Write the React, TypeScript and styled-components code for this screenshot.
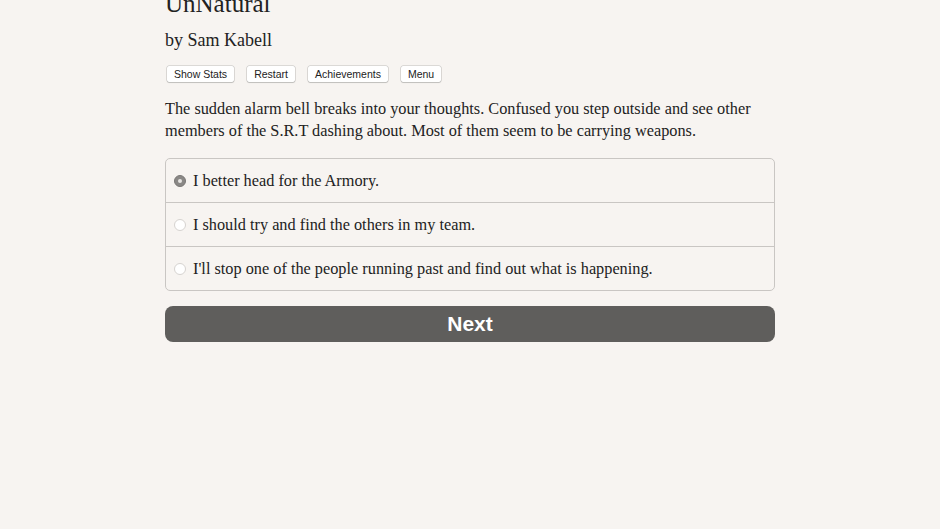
import React, { useState } from 'react';
import styled, { createGlobalStyle } from 'styled-components';

const GlobalStyle = createGlobalStyle`
    html, body {
        margin: 0;
        padding: 0;
        background-color: #f7f4f1;
    }
    body {
        font-family: "Liberation Serif", "Times New Roman", serif;
        color: #222;
    }
`;

const Page = styled.div`
    width: 610px;
    margin: 0 auto;
    padding-bottom: 40px;
`;

const Title = styled.h1`
    font-size: 25px;
    font-weight: normal;
    margin: -10px 0 0 0;
    line-height: 28px;
    color: #222;
`;

const Author = styled.h2`
    font-size: 18px;
    font-weight: normal;
    margin: 11px 0 0 0;
    line-height: 22px;
    color: #222;
`;

const Toolbar = styled.div`
    display: flex;
    gap: 13px;
    margin: 15px 0 0 2px;
`;

const ToolBtn = styled.button`
    font-family: "Liberation Sans", Arial, sans-serif;
    font-size: 10.5px;
    height: 16px;
    padding: 0 7px;
    background-color: #fff;
    border: none;
    border-radius: 2px;
    box-shadow: 0 0 0 0.5px rgba(0, 0, 0, 0.22), 0 1px 1px rgba(0, 0, 0, 0.12);
    color: #222;
    cursor: pointer;
`;

const Passage = styled.p`
    font-size: 16.3px;
    line-height: 22px;
    margin: 16px 0 16px 0;
`;

const Choices = styled.div`
    border: 1px solid #c9c6c3;
    border-radius: 5px;
    overflow: hidden;
`;

const Choice = styled.label`
    display: flex;
    align-items: center;
    height: 43px;
    padding-left: 8px;
    font-size: 16.3px;
    cursor: pointer;
    & + & {
        border-top: 1px solid #c9c6c3;
    }
`;

const Radio = styled.span<{ $checked: boolean }>`
    width: 12px;
    height: 12px;
    border-radius: 50%;
    margin-right: 7px;
    box-sizing: border-box;
    flex-shrink: 0;
    background-color: ${(p) => (p.$checked ? '#8a8886' : '#fff')};
    border: 1px solid ${(p) => (p.$checked ? '#7a7876' : '#d6d3d0')};
    display: flex;
    align-items: center;
    justify-content: center;
    &::after {
        content: '';
        width: 4px;
        height: 4px;
        border-radius: 50%;
        background-color: ${(p) => (p.$checked ? '#e8e6e4' : 'transparent')};
    }
`;

const NextBtn = styled.button`
    display: block;
    width: 100%;
    height: 36px;
    margin-top: 15px;
    border: none;
    border-radius: 8px;
    background-color: #5f5e5c;
    color: #fff;
    font-family: "Liberation Sans", Arial, sans-serif;
    font-weight: bold;
    font-size: 21px;
    cursor: pointer;
`;

const options = [
    'I better head for the Armory.',
    'I should try and find the others in my team.',
    "I'll stop one of the people running past and find out what is happening.",
];

export default function App() {
    const [selected, setSelected] = useState(0);

    return (
        <>
            <GlobalStyle />
            <Page>
                <Title>UnNatural</Title>
                <Author>by Sam Kabell</Author>
                <Toolbar>
                    <ToolBtn>Show Stats</ToolBtn>
                    <ToolBtn>Restart</ToolBtn>
                    <ToolBtn>Achievements</ToolBtn>
                    <ToolBtn>Menu</ToolBtn>
                </Toolbar>
                <Passage>
                    The sudden alarm bell breaks into your thoughts. Confused you step outside and see other
                    members of the S.R.T dashing about. Most of them seem to be carrying weapons.
                </Passage>
                <Choices>
                    {options.map((text, i) => (
                        <Choice key={i} onClick={() => setSelected(i)}>
                            <Radio $checked={selected === i} />
                            {text}
                        </Choice>
                    ))}
                </Choices>
                <NextBtn>Next</NextBtn>
            </Page>
        </>
    );
}
